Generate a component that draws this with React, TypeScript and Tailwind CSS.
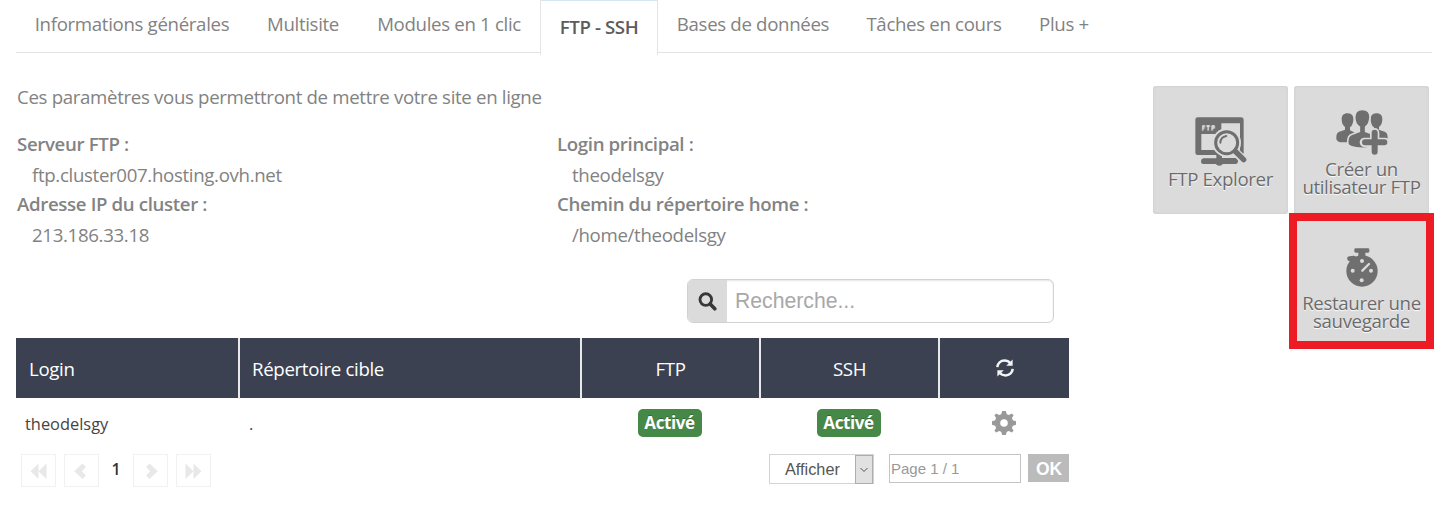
import type { ReactNode } from "react";

const tabs = [
  { label: "Informations générales", width: "w-[232px]" },
  { label: "Multisite", width: "w-[110px]" },
  { label: "Modules en 1 clic", width: "w-[182px]" },
  { label: "FTP - SSH", width: "w-[118px]", active: true },
  { label: "Bases de données", width: "w-[190px]" },
  { label: "Tâches en cours", width: "w-[172px]" },
  { label: "Plus +", width: "w-[88px]" },
];

function Tabs() {
  return (
    <nav className="ml-4 flex h-[53px] w-[1416px] border-b border-[#e4e4e4]">
      {tabs.map((t) =>
        t.active ? (
          <div
            key={t.label}
            className={`${t.width} h-[55px] border-x border-t border-x-[#e4e4e4] border-t-[#d5e8f1] bg-white pt-[11px] text-center font-semibold tracking-[-0.4px] text-[#5c5c5c]`}
          >
            {t.label}
          </div>
        ) : (
          <div key={t.label} className={`${t.width} pt-[9px] text-center`}>
            {t.label}
          </div>
        ),
      )}
    </nav>
  );
}

function Info({ label, value }: { label: string; value: string }) {
  return (
    <div>
      <dt className="font-semibold tracking-[-0.36px] text-[#838383]">{label}</dt>
      <dd className="pt-px pl-[15px] leading-[29px]">{value}</dd>
    </div>
  );
}

function SearchIcon() {
  return (
    <svg className="h-[19px] w-[19px]" viewBox="0 0 19 19" fill="none" stroke="#383838">
      <circle cx="7.8" cy="7.6" r="5.8" strokeWidth="2.9" />
      <path d="M12.2 12l4.6 4.8" strokeWidth="3.6" strokeLinecap="round" />
    </svg>
  );
}

function RefreshIcon() {
  return (
    <svg className="h-[18px] w-[18px]" viewBox="0 0 18 18" fill="none">
      <path d="M1.3 8.2C1.6 4.2 4.8 1.6 8.4 1.6c2.8 0 4.6 1 6 2.6" stroke="#f4f4f4" strokeWidth="2.5" />
      <path d="M16.6 0.4v6.4h-6.4z" fill="#f4f4f4" />
      <path d="M16.7 9.8c-.3 4-3.5 6.6-7.1 6.6-2.8 0-4.6-1-6-2.6" stroke="#f4f4f4" strokeWidth="2.5" />
      <path d="M1.4 17.6v-6.4h6.4z" fill="#f4f4f4" />
    </svg>
  );
}

function ExplorerIcon() {
  return (
    <svg className="h-[49px] w-[52px]" viewBox="164 127 156 147" fill="none">
      <path d="M172 128h130q8 0 8 8v98q0 7-7 7H172q-7 0-7-7v-99q0-7 7-7z" fill="#6f6f6f" />
      <path d="M183 178h46q14 0 14-14v-18h56v80H183z" fill="#dbdbdb" />
      <text x="184" y="165" fontSize="20" fontWeight="600" letterSpacing="3" fontFamily="Open Sans, sans-serif" fill="#dbdbdb">FTP</text>
      <path d="M228 240h17v10h40q8 0 8 9t-8 9h-38q-1 5-10 5t-10-5h-38q-7 0-7-8t7-9h39z" fill="#6f6f6f" />
      <circle cx="259" cy="204" r="43" fill="#dbdbdb" />
      <path d="M290 236l20 20" stroke="#dbdbdb" strokeWidth="25" strokeLinecap="round" />
      <circle cx="259" cy="204" r="33" stroke="#6f6f6f" strokeWidth="9" />
      <path d="M285 230l25 25" stroke="#6f6f6f" strokeWidth="16" strokeLinecap="round" />
      <path d="M240 204q1-17 18-20" stroke="#6f6f6f" strokeWidth="6" strokeLinecap="round" />
    </svg>
  );
}

function UsersIcon() {
  return (
    <svg className="h-[46px] w-[52px]" viewBox="167 106 156 138" fill="none">
      <g fill="#6f6f6f">
        <path d="M202 119c13 0 18 9 17 20s-4 18-10 22v9l17 8v28h-46q-12-4-12-11c0-17 4-19 14-22l12-5v-8c-7-5-10-13-10-23 0-11 5-18 18-18z" />
        <path d="M288 119c-13 0-18 9-17 20s4 18 10 22v9l-17 8v28h46q12-4 12-11c0-17-4-19-14-22l-12-5v-8c7-5 10-13 10-23 0-11-5-18-18-18z" />
      </g>
      <path d="M246 107c17 0 24 10 23 25s-5 23-13 28v13l20 8c12 4 15 10 15 27 0 9-17 16-45 16s-44-7-44-16c0-17 3-23 15-27l20-8v-13c-9-6-14-15-14-29 0-15 7-24 23-24z" fill="#6f6f6f" stroke="#dbdbdb" strokeWidth="5" />
      <path d="M283 177v58M252 206h62" stroke="#dbdbdb" strokeWidth="28" strokeLinecap="round" />
      <path d="M283 177v57M254 206h58" stroke="#6f6f6f" strokeWidth="18" strokeLinecap="round" />
    </svg>
  );
}

function StopwatchIcon() {
  return (
    <svg className="h-[39px] w-[32px]" viewBox="197 129 96 117" fill="none">
      <rect x="222" y="130" width="45" height="13" rx="4" fill="#6f6f6f" />
      <path d="M234 140h21v15h-21z" fill="#6f6f6f" />
      <path d="M208 161l12-1" stroke="#6f6f6f" strokeWidth="15" strokeLinecap="round" />
      <circle cx="245" cy="198" r="47" fill="#6f6f6f" />
      <path d="M246 197l20-20" stroke="#dbdbdb" strokeWidth="7" strokeLinecap="round" />
      <g fill="#dbdbdb">
        <circle cx="245" cy="168" r="6" />
        <circle cx="217" cy="197" r="6" />
        <circle cx="272" cy="197" r="6" />
        <circle cx="244" cy="226" r="6" />
      </g>
    </svg>
  );
}

function Tile({ className, children }: { className: string; children: ReactNode }) {
  return (
    <button
      className={`${className} flex h-32 w-[135px] flex-col items-center rounded-[3px] bg-[#dbdbdb] leading-[18px] tracking-[-0.36px] whitespace-nowrap text-[#6b6b6b] shadow-[inset_0_0_3px_#c8c8c8] [text-shadow:0_1px_1px_#fff]`}
    >
      {children}
    </button>
  );
}

function Badge() {
  return (
    <span className="flex h-7 w-16 items-center justify-center rounded-[5px] bg-[#468847] text-[17px] font-bold tracking-[-0.4px] text-white [text-shadow:0_-1px_0_rgba(0,0,0,.25)]">
      Activé
    </span>
  );
}

function PageButton({ d, className }: { d: string; className: string }) {
  return (
    <button className={`${className} flex h-[33px] w-[35px] items-center justify-center border border-[#f1f1f1] bg-white`}>
      <svg className="h-5 w-[18px]" viewBox="0 0 18 20" fill="#e8e8e8">
        <path d={d} />
      </svg>
    </button>
  );
}

function UsersTable() {
  return (
    <div className="ml-4 w-[1053px]">
      <div className="grid h-[60px] grid-cols-[224px_342px_179px_179px_129px] bg-[#3c4151] leading-[61px] text-white">
        <div className="border-r-2 border-[#e9e9ec] pl-[13px]">Login</div>
        <div className="border-r-2 border-[#e9e9ec] pl-[12px]">Répertoire cible</div>
        <div className="border-r-2 border-[#e9e9ec] text-center">FTP</div>
        <div className="border-r-2 border-[#e9e9ec] text-center">SSH</div>
        <div className="flex items-center justify-center pb-[2px]">
          <RefreshIcon />
        </div>
      </div>
      <div className="grid h-[50px] grid-cols-[223px_341px_179px_179px_131px] items-center text-[16.4px] tracking-normal text-[#444]">
        <div className="pt-px pl-[9px]">theodelsgy</div>
        <div className="pt-px pl-[10px]">.</div>
        <div className="flex justify-center">
          <Badge />
        </div>
        <div className="flex justify-center">
          <Badge />
        </div>
        <div className="flex justify-center">
          <svg className="h-6 w-6" viewBox="-12 -12 24 24" fill="#999">
            <path
              fillRule="evenodd"
              d="M-1.8-12H1.8L2.8-8.8 5-7.9 7.8-9.6 9.6-7.8 7.9-5 8.8-2.8 12-1.8V1.8L8.8 2.8 7.9 5 9.6 7.8 7.8 9.6 5 7.9 2.8 8.8 1.8 12H-1.8L-2.8 8.8-5 7.9-7.8 9.6-9.6 7.8-7.9 5-8.8 2.8-12 1.8V-1.8L-8.8-2.8-7.9-5-9.6-7.8-7.8-9.6-5-7.9-2.8-8.8ZM0-3.8A3.8 3.8 0 1 0 0 3.8A3.8 3.8 0 1 0 0-3.8Z"
            />
          </svg>
        </div>
      </div>
      <div className="flex items-start pt-[6px] pl-[5px] tracking-normal">
        <PageButton className="" d="M8.5 2.500v15.500L0.500 10.250zM16.500 2.500v15.500L8.500 10.250z" />
        <PageButton className="ml-2" d="M9.500 2.500l3.500 3.500-4.200 4.300 4.200 4.300-3.500 3.500-8.300-7.800z" />
        <span className="w-[34px] text-center text-[16px] font-semibold text-[#333]">1</span>
        <PageButton className="" d="M7.500 2.500L4 6l4.200 4.300L4 14.600l3.500 3.500 8.300-7.800z" />
        <PageButton className="ml-2" d="M0.500 2.500v15.500l8-7.750zM8.500 2.500v15.500l8-7.750z" />
        <div className="ml-auto flex items-start font-['Liberation_Sans',Arial,sans-serif]">
          <div className="flex h-[30px] w-[105px] justify-between border border-[#d4d4d4] text-[16.300px] leading-[28px] text-[#555]">
            <span className="pl-[15px]">Afficher</span>
            <span className="flex h-[29px] w-[18px] items-center justify-center border border-[#adadad] bg-[#e1e1e1]">
              <svg className="h-2 w-2" viewBox="0 0 8 8" fill="none" stroke="#555">
                <path d="M0.5 2L4 5.5 7.5 2" />
              </svg>
            </span>
          </div>
          <div className="ml-[15px] h-[29px] w-[132px] border border-[#c4c4c4] pl-px text-[15px] leading-[27px] text-[#999]">
            Page 1 / 1
          </div>
          <button className="ml-[7px] h-[28px] w-[41px] bg-[#bbb] pl-px text-[17.5px] leading-[30px] font-bold text-white">OK</button>
        </div>
      </div>
    </div>
  );
}

export default function App() {
  return (
    <main className="h-[513px] w-[1453px] overflow-hidden bg-white font-['Open_Sans',sans-serif] text-[18.67px] leading-[30px] tracking-[-0.33px] whitespace-nowrap text-[#828282]">
      <Tabs />
      <div className="flex h-[285px]">
        <section className="w-[1153px] pt-[29px] pl-[17px]">
          <p>Ces paramètres vous permettront de mettre votre site en ligne</p>
          <dl className="mt-[17px] grid grid-cols-[540px_1fr]">
            <Info label="Serveur FTP :" value="ftp.cluster007.hosting.ovh.net" />
            <Info label="Login principal :" value="theodelsgy" />
            <Info label="Adresse IP du cluster :" value="213.186.33.18" />
            <Info label="Chemin du répertoire home :" value="/home/theodelsgy" />
          </dl>
          <div className="mt-[30px] ml-[670px] flex h-[44px] w-[367px] overflow-hidden rounded-[6px] border border-[#d2d2d2] font-['Liberation_Sans',Arial,sans-serif] tracking-normal shadow-[inset_0_1px_2px_#e5e5e5]">
            <span className="flex w-[39px] items-center justify-center bg-[#dbdbdb]">
              <SearchIcon />
            </span>
            <span className="pl-[8px] text-[21.2px] leading-[42px] text-[#a8a8a8]">Recherche...</span>
          </div>
        </section>
        <aside className="grid w-[276px] grid-cols-2 content-start gap-x-[6px] gap-y-[5px] pt-[33px]">
          <Tile className="pt-[31px]">
            <ExplorerIcon />
            <span className="mt-[4px]">FTP Explorer</span>
          </Tile>
          <Tile className="pt-[23px]">
            <UsersIcon />
            <span className="mt-[5px]">Créer un</span>
            <span>utilisateur FTP</span>
          </Tile>
          <div className="relative col-start-2">
            <Tile className="pt-[29px]">
              <StopwatchIcon />
              <span className="mt-[7px]">Restaurer une</span>
              <span>sauvegarde</span>
            </Tile>
            <div className="absolute top-[-6px] left-[-5px] h-[136px] w-[145px] border-8 border-[#ed1c24]" />
          </div>
        </aside>
      </div>
      <UsersTable />
    </main>
  );
}
